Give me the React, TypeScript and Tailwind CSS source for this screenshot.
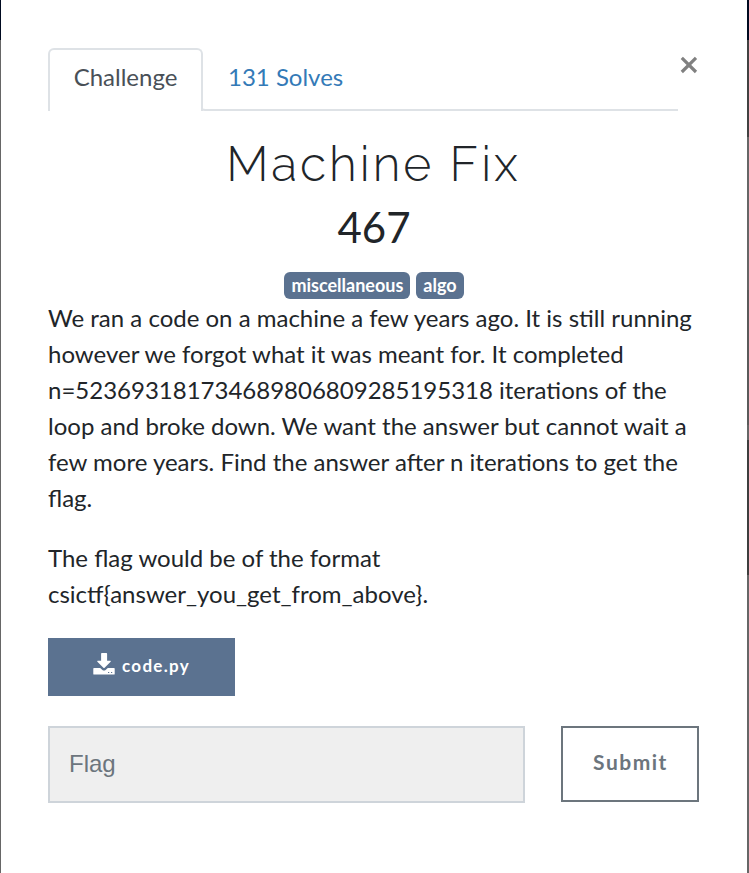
import React from "react";

function Tabs() {
  return (
    <div className="flex h-[63px] w-[630px] text-[24px] leading-[36px]">
      <div className="h-[63px] w-[155px] shrink-0 rounded-t-[6px] border-2 border-b-0 border-[#dee2e6] pt-[9px] text-center text-[#495057]">Challenge</div>
      <div className="-ml-[2px] h-[63px] grow rounded-bl-[4px] border-b-2 border-l-2 border-[#dee2e6] border-l-transparent pt-[11px] pl-[25px] text-[#337ab7]">131 Solves</div>
    </div>
  );
}

function DownloadIcon() {
  return (
    <svg className="shrink-0" width="22" height="22" viewBox="0 0 22 22" fill="#fff">
      <path d="M8.8 0h4.6q.7 0 .7.7v7h3.1q1.1 0 .4 1l-6 6q-.6.5-1.2 0l-6-6q-.7-1 .4-1h3.3v-7q0-.7.7-.7z" />
      <path d="M1 14.9h6.2l2.2 2q1.6 1.2 3.2 0l2.2-2H21q.7 0 .7.7v5.3q0 .7-.7.7H1q-.7 0-.7-.7v-5.3q0-.7.7-.7z" />
      <path d="M15 18.9h1.2v1.1H15zM18 18.9h1.2v1.1H18z" fill="#5b7290" />
    </svg>
  );
}

export default function App() {
  return (
    <div className="flex h-[873px] w-[749px] bg-white font-['Lato',sans-serif] text-[#212529]">
      <div className="w-px shrink-0 bg-[#666]">
        <div className="h-[40px] bg-[#000a20]" />
      </div>
      <main className="flex w-[746px] shrink-0 flex-col pt-[48px] pl-[47px]">
        <div className="flex">
          <Tabs />
          <svg className="mt-[8px] ml-[2px]" width="18" height="18" viewBox="0 0 18 18" stroke="#808080" strokeWidth="3.2">
            <path d="M1.8 1.8L16 16M16 1.8L1.8 16" />
          </svg>
        </div>
        <h1 className="mt-[24px] mr-[48px] text-center font-['Raleway',sans-serif] text-[48px] leading-[58px] font-light tracking-[3px]">Machine Fix</h1>
        <h2 className="mt-[9px] mr-[47px] text-center text-[42px] leading-[50px]">467</h2>
        <div className="mt-[20px] mr-[47px] flex justify-center gap-[6px] text-[18px] leading-[27px] font-bold text-white">
          <span className="h-[27px] rounded-[6px] bg-[#5b7290] px-[7px] leading-[26px]">miscellaneous</span>
          <span className="h-[27px] rounded-[6px] bg-[#5b7290] px-[7px] leading-[26px]">algo</span>
        </div>
        <div className="mt-px text-[24px] leading-[36px] whitespace-nowrap">
          <p>We ran a code on a machine a few years ago. It is still running<br />however we forgot what it was meant for. It completed<br />n=523693181734689806809285195318 iterations of the<br />loop and broke down. We want the answer but cannot wait a<br />few more years. Find the answer after n iterations to get the<br />flag.</p>
          <p className="mt-[24px]">The flag would be of the format<br />csictf{"{"}answer_you_get_from_above{"}"}.</p>
        </div>
        <button className="mt-[26px] flex h-[58px] w-[187px] items-center bg-[#5b7290] pb-[6px] pl-[45px] text-[17px] font-bold tracking-[1.3px] text-white">
          <DownloadIcon />
          <span className="pt-[4px] pl-[7px]">code.py</span>
        </button>
        <div className="mt-[30px] flex">
          <input placeholder="Flag" className="h-[77px] w-[477px] border-2 border-[#ced4da] bg-[#efefef] pb-[2px] pl-[19px] font-['Liberation_Sans',sans-serif] text-[24px] outline-none placeholder:text-[#6c757d]" />
          <button className="ml-[36px] h-[76px] w-[138px] border-2 border-[#6c757d] pb-[4px] pl-px text-[21px] font-bold tracking-[1.5px] text-[#6c757d]">Submit</button>
        </div>
      </main>
      <div className="flex w-[2px] shrink-0 flex-col bg-[#666]">
        <div className="h-[40px] bg-[#000a20]" />
        <div className="h-[97px] bg-[#414141]" />
        <div className="h-[153px] bg-[#666]" />
        <div className="h-[135px] bg-[#5a5a5a]" />
        <div className="h-[15px] bg-[#666]" />
        <div className="h-[135px] bg-[#3e3e3e]" />
      </div>
    </div>
  );
}
